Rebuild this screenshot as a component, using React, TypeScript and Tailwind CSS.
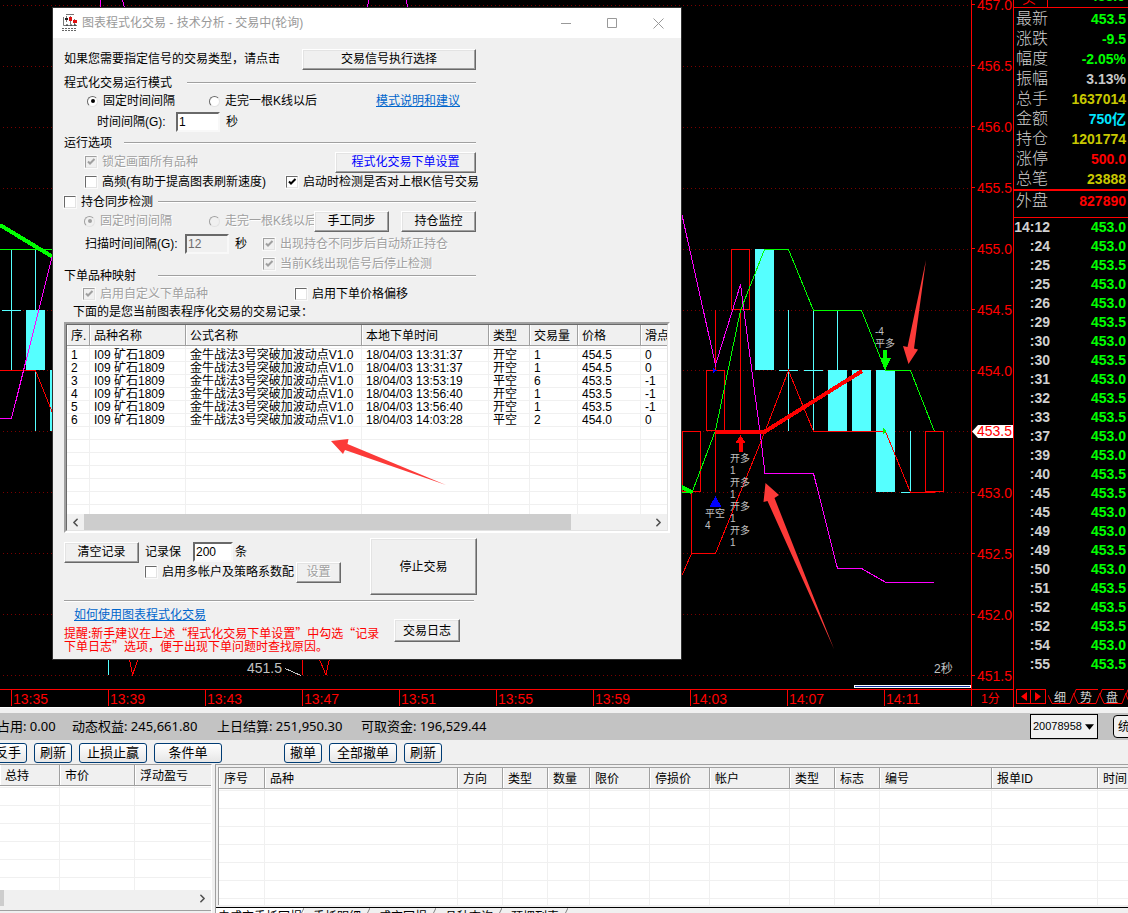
import React from 'react';
import clsx from 'clsx';
import { ChevronLeft, ChevronRight } from 'lucide-react';

interface TradeRecord {
  name: string;
  formula: string;
  time: string;
  type: string;
  volume: number;
  price: string;
  slip: number;
}

const records: TradeRecord[] = [
  { name: 'I09 矿石1809', formula: '金牛战法3号突破加波动点V1.0', time: '18/04/03 13:31:37', type: '开空', volume: 1, price: '454.5', slip: 0 },
  { name: 'I09 矿石1809', formula: '金牛战法3号突破加波动点V1.0', time: '18/04/03 13:31:37', type: '开空', volume: 1, price: '454.5', slip: 0 },
  { name: 'I09 矿石1809', formula: '金牛战法3号突破加波动点V1.0', time: '18/04/03 13:53:19', type: '平空', volume: 6, price: '453.5', slip: -1 },
  { name: 'I09 矿石1809', formula: '金牛战法3号突破加波动点V1.0', time: '18/04/03 13:56:40', type: '开空', volume: 1, price: '453.5', slip: -1 },
  { name: 'I09 矿石1809', formula: '金牛战法3号突破加波动点V1.0', time: '18/04/03 13:56:40', type: '开空', volume: 1, price: '453.5', slip: -1 },
  { name: 'I09 矿石1809', formula: '金牛战法3号突破加波动点V1.0', time: '18/04/03 14:03:28', type: '平空', volume: 2, price: '454.0', slip: 0 },
];

const recordColumns = [
  { title: '序.', width: 23 },
  { title: '品种名称', width: 96 },
  { title: '公式名称', width: 176 },
  { title: '本地下单时间', width: 127 },
  { title: '类型', width: 41 },
  { title: '交易量', width: 48 },
  { title: '价格', width: 63 },
  { title: '滑点', width: 29 },
];

const quotes = [
  { label: '最新', value: '453.5', color: 'text-[#00ff00]' },
  { label: '涨跌', value: '-9.5', color: 'text-[#00ff00]' },
  { label: '幅度', value: '-2.05%', color: 'text-[#00ff00]' },
  { label: '振幅', value: '3.13%', color: 'text-[#c8c8c8]' },
  { label: '总手', value: '1637014', color: 'text-[#c8c800]' },
  { label: '金额', value: '750亿', color: 'text-[#00e6ff]' },
  { label: '持仓', value: '1201774', color: 'text-[#c8c800]' },
  { label: '涨停', value: '500.0', color: 'text-[#ff0000]' },
  { label: '总笔', value: '23888', color: 'text-[#c8c800]' },
];

const ticks: [string, string][] = [
  ['14:12', '453.0'], [':24', '453.0'], [':25', '453.5'], [':25', '453.0'],
  [':26', '453.0'], [':29', '453.5'], [':30', '453.0'], [':30', '453.5'],
  [':31', '453.0'], [':32', '453.5'], [':33', '453.5'], [':37', '453.0'],
  [':39', '453.0'], [':40', '453.5'], [':45', '453.5'], [':45', '453.0'],
  [':49', '453.0'], [':49', '453.5'], [':50', '453.0'], [':51', '453.5'],
  [':52', '453.5'], [':52', '453.5'], [':54', '453.0'], [':55', '453.5'],
];

const prices = ['457.0', '456.5', '456.0', '455.5', '455.0', '454.5', '454.0', '453.5', '453.0', '452.5', '452.0', '451.5'];
const times = ['13:35', '13:39', '13:43', '13:47', '13:51', '13:55', '13:59', '14:03', '14:07', '14:11'];
const gridLines = [5, 66, 127, 188, 249, 310, 370, 431, 492, 553, 614, 675];

const positionColumns = [
  { title: '总持', width: 60 },
  { title: '市价', width: 75 },
  { title: '浮动盈亏', width: 77 },
];

const orderColumns = [
  { title: '序号', width: 46 },
  { title: '品种', width: 193 },
  { title: '方向', width: 45 },
  { title: '类型', width: 45 },
  { title: '数量', width: 42 },
  { title: '限价', width: 60 },
  { title: '停损价', width: 60 },
  { title: '帐户', width: 80 },
  { title: '类型', width: 45 },
  { title: '标志', width: 45 },
  { title: '编号', width: 112 },
  { title: '报单ID', width: 106 },
  { title: '时间', width: 60 },
];

interface CheckProps {
  label: string;
  checked?: boolean;
  disabled?: boolean;
  className?: string;
}

const disabledText = 'text-[#a0a0a0] [text-shadow:1px_1px_0_#fff]';

const CheckBox: React.FC<CheckProps> = ({ label, checked, disabled, className }) => (
  <label className={clsx('flex shrink-0 items-center whitespace-nowrap', disabled && disabledText, className)}>
    <span className="relative mr-[5px] size-3 shrink-0">
      <input
        type="checkbox"
        defaultChecked={checked}
        disabled={disabled}
        className="peer block size-3 appearance-none border border-t-[#696969] border-r-[#e3e3e3] border-b-[#e3e3e3] border-l-[#696969] bg-white shadow-[0_0_0_1px_#fafafa] disabled:border-t-[#a0a0a0] disabled:border-l-[#a0a0a0] disabled:bg-[#f0f0f0]"
      />
      <svg viewBox="0 0 12 12" className="pointer-events-none absolute inset-0 hidden size-3 peer-checked:block">
        <path d="M3 5.5 5 7.5 9.500 3" fill="none" stroke="currentColor" strokeWidth="2" />
      </svg>
    </span>
    {label}
  </label>
);

const Radio: React.FC<CheckProps & { name: string }> = ({ label, name, checked, disabled, className }) => (
  <label className={clsx('flex shrink-0 items-center overflow-hidden whitespace-nowrap', disabled && disabledText, className)}>
    <span className="relative mr-[5px] size-[11px] shrink-0">
      <input
        type="radio"
        name={name}
        defaultChecked={checked}
        disabled={disabled}
        className="peer block size-[11px] appearance-none rounded-full border border-t-[#696969] border-r-[#e3e3e3] border-b-[#e3e3e3] border-l-[#696969] bg-white disabled:border-t-[#a0a0a0] disabled:border-l-[#a0a0a0] disabled:bg-[#f0f0f0]"
      />
      <span className="pointer-events-none absolute inset-0 m-auto hidden size-1 rounded-full bg-current peer-checked:block" />
    </span>
    {label}
  </label>
);

const ClassicButton: React.FC<React.ButtonHTMLAttributes<HTMLButtonElement>> = ({ className, ...props }) => (
  <button
    type="button"
    className={clsx(
      'h-[21px] shrink-0 border border-t-white border-r-[#696969] border-b-[#696969] border-l-white bg-[#f0f0f0] text-center whitespace-nowrap shadow-[inset_-1px_-1px_0_#a0a0a0,inset_1px_1px_0_#e3e3e3]',
      className,
    )}
    {...props}
  />
);

const sunken = 'border-2 border-t-[#696969] border-r-[#f8f8f8] border-b-[#f8f8f8] border-l-[#696969]';

const Rule: React.FC = () => <div className="h-[2px] flex-1 border-t border-b border-t-[#a0a0a0] border-b-white" />;

const GridHead: React.FC<{ columns: { title: string; width: number }[]; className: string }> = ({ columns, className }) => (
  <thead>
    <tr>
      {columns.map((c, i) => (
        <th
          key={i}
          className={clsx(
            'overflow-hidden border-r border-b border-[#a0a0a0] bg-[#f0f0f0] p-0 text-left font-normal whitespace-nowrap shadow-[inset_1px_0_0_#fff]',
            className,
          )}
        >
          {c.title}
        </th>
      ))}
    </tr>
  </thead>
);

const RecordTable: React.FC = () => (
  <div className="border-2 border-t-[#a0a0a0] border-r-white border-b-white border-l-[#a0a0a0]">
    <div className="border border-t-[#696969] border-r-[#e3e3e3] border-b-[#e3e3e3] border-l-[#696969] bg-white">
      <div className="h-[189px] overflow-hidden">
        <table className="w-full table-fixed border-separate border-spacing-0">
          <colgroup>
            {recordColumns.map((c) => <col key={c.title} style={{ width: c.width }} />)}
          </colgroup>
          <GridHead columns={recordColumns} className="h-[21px] pt-px pl-1" />
          <tbody className="leading-3">
            <tr>
              {recordColumns.map((c) => <td key={c.title} className="h-[3px] border-r border-b border-[#f0f0f0] p-0" />)}
            </tr>
            {Array.from({ length: 13 }, (_, i) => {
              const r = records[i];
              const cells = r ? [i + 1, r.name, r.formula, r.time, r.type, r.volume, r.price, r.slip] : Array(8).fill('');
              return (
                <tr key={i}>
                  {cells.map((cell, j) => (
                    <td key={j} className="h-[13px] border-r border-b border-[#f0f0f0] p-0 pl-1 whitespace-nowrap">{cell}</td>
                  ))}
                </tr>
              );
            })}
          </tbody>
        </table>
      </div>
      <div className="flex h-4 items-center bg-[#f0f0f0] text-[#505050]">
        <button type="button" aria-label="向左滚动" className="flex w-[17px] justify-center"><ChevronLeft size={13} strokeWidth={3} /></button>
        <div className="flex h-full flex-1"><div className="h-full w-[86%] bg-[#cdcdcd]" /></div>
        <button type="button" aria-label="向右滚动" className="flex w-[17px] justify-center"><ChevronRight size={13} strokeWidth={3} /></button>
      </div>
    </div>
  </div>
);

const TradeDialog: React.FC = () => (
  <section className="absolute top-2 left-[53px] w-[628px] bg-[#f0f0f0] text-xs text-black shadow-[0_0_0_1px_#303030]">
    <header className="flex h-[30px] items-center bg-white pl-2 text-[#999]">
      <svg viewBox="0 0 17 18" className="mr-1 h-[18px] w-[17px]">
        <path d="M2.500 3v8.500H16" fill="none" stroke="#777" />
        <path d="M5.500 2v6M9.500 2v8M13.500 5v6M5 .5h8" stroke="#777" />
        <path d="M4 4h3v2H4z" fill="#222" />
        <path d="M8 3h3v4H8zM12 6h4v3h-4z" fill="#e01010" />
        <path d="M5 11h2M9 11h2M13 11h2" stroke="#222" />
        <path d="M1 14.500h15M1 16.500h15" stroke="#666" strokeDasharray="2 1" />
      </svg>
      <h1>图表程式化交易 - 技术分析 - 交易中(轮询)</h1>
      <div className="ml-auto flex">
        <button type="button" aria-label="最小化" className="flex h-[30px] w-[45px] items-center justify-center">
          <svg viewBox="0 0 11 11" className="size-[11px]"><path d="M0 5.500h10" stroke="#999" /></svg>
        </button>
        <button type="button" aria-label="最大化" className="flex h-[30px] w-[46px] items-center justify-center">
          <svg viewBox="0 0 11 11" className="size-[11px]"><path d="M.5 .5h9v9h-9z" fill="none" stroke="#999" /></svg>
        </button>
        <button type="button" aria-label="关闭" className="flex h-[30px] w-[46px] items-center justify-center">
          <svg viewBox="0 0 11 11" className="size-[11px]"><path d="M.5 .5l10 10M10.500 .5l-10 10" stroke="#999" /></svg>
        </button>
      </div>
    </header>

    <div className="px-[11px] pt-[10px] pb-[7px]">
      <div className="w-[412px]">
        <div className="mb-1 flex h-[22px] items-center">
          <span className="w-[238px]">如果您需要指定信号的交易类型，请点击</span>
          <ClassicButton className="w-[174px]">交易信号执行选择</ClassicButton>
        </div>

        <div className="flex h-[18px] items-center">
          <h2 className="w-[123px]">程式化交易运行模式</h2>
          <Rule />
        </div>
        <div className="flex h-[18px] items-center pl-[23px]">
          <Radio name="mode" label="固定时间间隔" checked className="w-[122px]" />
          <Radio name="mode" label="走完一根K线以后" className="w-[167px]" />
          <a href="#mode" className="text-[#0066cc] underline">模式说明和建议</a>
        </div>
        <div className="flex h-6 items-center pl-[33px]">
          <label htmlFor="interval" className="w-[79px]">时间间隔(G):</label>
          <input id="interval" defaultValue="1" className={clsx('h-5 w-[44px] bg-white px-px', sunken)} />
          <span className="ml-[6px]">秒</span>
        </div>

        <div className="flex h-[18px] items-center">
          <h2 className="w-[60px]">运行选项</h2>
          <Rule />
        </div>
        <div className="flex h-5 items-center pl-[21px]">
          <CheckBox label="锁定画面所有品种" checked disabled className="w-[250px]" />
          <ClassicButton className="w-[141px] text-[#0000ff]">程式化交易下单设置</ClassicButton>
        </div>
        <div className="flex h-5 items-center pl-[21px]">
          <CheckBox label="高频(有助于提高图表刷新速度)" className="w-[201px]" />
          <CheckBox label="启动时检测是否对上根K信号交易" checked />
        </div>

        <div className="flex h-5 items-center">
          <CheckBox label="持仓同步检测" className="w-[94px]" />
          <Rule />
        </div>
        <div className="flex h-[18px] items-center pl-5">
          <Radio name="sync" label="固定时间间隔" checked disabled className="w-[125px]" />
          <Radio name="sync" label="走完一根K线以后" disabled className="w-[105px]" />
          <ClassicButton className="w-[75px]">手工同步</ClassicButton>
          <ClassicButton className="ml-3 w-[75px]">持仓监控</ClassicButton>
        </div>
        <div className="flex h-7 items-center pl-[21px]">
          <label htmlFor="scan" className="w-[100px]">扫描时间间隔(G):</label>
          <input id="scan" defaultValue="12" disabled className={clsx('h-5 w-[44px] bg-[#f0f0f0] px-px text-[#6d6d6d]', sunken)} />
          <span className="ml-[6px] w-7">秒</span>
          <CheckBox label="出现持仓不同步后自动矫正持仓" checked disabled />
        </div>
        <div className="flex h-3 items-center pl-[199px]">
          <CheckBox label="当前K线出现信号后停止检测" checked disabled />
        </div>

        <div className="flex h-3 items-center">
          <h2 className="w-[94px]">下单品种映射</h2>
          <Rule />
        </div>
        <div className="flex h-6 items-center pl-[19px]">
          <CheckBox label="启用自定义下单品种" checked disabled className="w-[212px]" />
          <CheckBox label="启用下单价格偏移" />
        </div>
        <p className="mb-1 pl-[9px] leading-3">下面的是您当前图表程序化交易的交易记录：</p>
      </div>

      <RecordTable />

      <div className="mt-[5px] flex w-[413px]">
        <div className="w-[306px]">
          <div className="flex h-7 items-center">
            <ClassicButton className="w-[75px]">清空记录</ClassicButton>
            <label htmlFor="keep" className="ml-[6px] w-12">记录保</label>
            <input id="keep" defaultValue="200" className={clsx('h-5 w-10 bg-white px-px', sunken)} />
            <span className="ml-[2px]">条</span>
          </div>
          <div className="flex h-3 items-center pl-[81px]">
            <CheckBox label="启用多帐户及策略系数配" className="w-[151px]" />
            <ClassicButton disabled className={clsx('w-[45px]', disabledText)}>设置</ClassicButton>
          </div>
        </div>
        <ClassicButton className="h-[57px] w-[107px]">停止交易</ClassicButton>
      </div>

      <div className="mt-[5px] flex w-[410px]"><Rule /></div>
      <div className="flex w-[412px] pt-[6px]">
        <div className="w-[330px] shrink-0">
          <a href="#help" className="ml-[10px] block w-fit leading-[14px] text-[#0066cc] underline">如何使用图表程式化交易</a>
          <p className="mt-1 font-['Noto_Sans_CJK_SC',sans-serif] leading-[13px] whitespace-nowrap text-[#ff0000]">
            提醒:新手建议在上述“程式化交易下单设置”中勾选“记录<br />下单日志”选项，便于出现下单问题时查找原因。
          </p>
        </div>
        <ClassicButton className="mt-[11px] h-[23px] w-[66px]">交易日志</ClassicButton>
      </div>
    </div>

    <svg viewBox="0 0 116 47" className="pointer-events-none absolute top-[431px] left-[278px] h-[47px] w-[116px]">
      <path d="M0 2 17.500 0 16.500 5 115 46 14 11 12 15z" fill="#fc3a38" />
    </svg>
  </section>
);

const entryLabels = [462, 486, 510, 534];

const Chart: React.FC = () => (
  <svg className="absolute inset-0 size-full" shapeRendering="crispEdges">
    {gridLines.map((y) => (
      <line key={y} x1="3" x2="100%" y1={y + 0.5} y2={y + 0.5} stroke="#7a0000" strokeDasharray="1 3" />
    ))}

    {/* left edge, before the dialog */}
    <g fill="none">
      <path d="M11.500 250v120M2 310.500h19M35.500 250v181" stroke="#55ffff" />
      <path d="M26 310h19v60h-19zM50 370h4v61h-4z" fill="#55ffff" />
      <path d="M0 370.500h35.500L53 414" stroke="#ff0000" />
      <path d="M0 249.500h53" stroke="#00ff00" />
      <path d="M0 225 53 257" stroke="#00ff00" strokeWidth="4" />
      <path d="M0 418.500h11.500L53 253M100.500 0v8M122.500 0l2 8M368.500 0l-1 8M406.500 0l1 8" stroke="#ff00ff" />
    </g>

    {/* candles */}
    <path d="M755 249h19v121h-19zM828 370h19v61h-19zM852 370h19v61h-19zM876 370h19v122h-19z" fill="#55ffff" />
    <path d="M779 370.500h19M804 370.500h19M788.500 310v121M813.500 310v121M837.500 310v60M910.500 431v61M901 492.500h10M108.500 655v20" stroke="#55ffff" fill="none" />
    <path
      d="M682.500 431.500h18v60h-18zM706.500 370.500h18v60h-18zM731.500 249.500h18v60h-18zM925.500 431.500h18v60h-18zM715.500 310v60M715.500 431v61M740.500 310v121M691.500 492v61M302.500 655v20"
      stroke="#ff0000"
      fill="none"
    />

    {/* channel lines */}
    <g fill="none">
      <path d="M680 580 691.500 553.500h24L765 431.500 788.500 370.500 813.500 431.500h72L910.500 492.500h24M129 656l3.500 19 6.500-19M318 656l8 19 4-19" stroke="#ff0000" />
      <path d="M680 206 715.500 365 740.500 284.500 761 440 765 473.500h48.500L837.500 568.500h24L886 582.500h48" stroke="#ff00ff" />
      <path d="M682 492.500h10L715.500 430.500 740.500 310.500 764.500 249.500h24L813.500 310.500h48L885.500 370.500h25L934.500 431.500" stroke="#00ff00" />
      <path d="M681 487l11 5" stroke="#00ff00" strokeWidth="4" />
      <path d="M715 431.500h50L862 371" stroke="#ff0000" strokeWidth="4" />
    </g>

    {/* signal marks */}
    <path d="M883 350h4v8h4l-6 12-5-12h3zM883 428l4 3-4 3z" fill="#00ff00" />
    <path d="M740.500 435l5 8h-3v9h-4v-9h-3z" fill="#ff0000" />
    <path d="M715.500 496l6 11h-12zM713 368l4 2.500-4 2.500z" fill="#0000ff" />

    <g fill="#c0c0c0" fontSize="10">
      {entryLabels.map((y) => (
        <React.Fragment key={y}>
          <text x="730" y={y}>开多</text>
          <text x="730" y={y + 12}>1</text>
        </React.Fragment>
      ))}
      <text x="705" y="517">平空</text>
      <text x="705" y="529">4</text>
      <text x="875" y="335">-4</text>
      <text x="875" y="347">平多</text>
    </g>
    <g fill="#c0c0c0">
      <text x="247" y="673" fontSize="14">451.5</text>
      <text x="934" y="673" fontSize="12">2秒</text>
      <path d="M285 668.500l16 7" stroke="#c0c0c0" />
    </g>

    <g fill="#fc3a38" shapeRendering="auto">
      <path d="M926 260 914 348.500 918 349.500 908.500 364 903 346 907.500 347z" />
      <path d="M765.500 483 779 495 774.500 498 834 649 767.500 501 763.500 502z" />
    </g>
  </svg>
);

const QuotePanel: React.FC = () => (
  <aside className="flex w-[115px] shrink-0 flex-col overflow-hidden border-l border-[#ff0000] text-base leading-5 text-[#d0d0d0]">
    <div className="flex h-[7px] items-end justify-between overflow-hidden pr-[3px] text-sm">
      <span className="h-full w-[34px] border-r border-[#ff0000] pl-2 text-[#ff0000]"><span className="-mt-3 block">买</span></span>
      <span className="-mt-[14px] h-5 self-start font-bold text-[#00ff00]">453.0</span>
    </div>
    <dl className="border-t border-b-2 border-[#ff0000] pt-px">
      {quotes.map((q) => (
        <div key={q.label} className="flex h-5 items-center justify-between pr-[2px] pl-[2px]">
          <dt className="font-light">{q.label}</dt>
          <dd className={clsx('text-sm font-bold', q.color)}>{q.value}</dd>
        </div>
      ))}
    </dl>
    <dl className="h-[27px] border-b border-[#ff0000]">
      <div className="flex h-5 items-center justify-between pr-[2px] pl-[2px]">
        <dt className="font-light">外盘</dt>
        <dd className="text-sm font-bold text-[#ff0000]">827890</dd>
      </div>
    </dl>
    <table className="w-full border-separate border-spacing-0 text-sm leading-[19px] font-bold">
      <tbody>
        {ticks.map(([time, price], i) => (
          <tr key={i}>
            <td className="w-9 p-0 text-right">{time}</td>
            <td className="p-0 pr-[2px] text-right text-[#00ff00]">{price}</td>
          </tr>
        ))}
      </tbody>
    </table>
    <nav className="mt-auto mb-[3px] flex h-[15px] shrink-0 pl-[2px] text-xs leading-[18px]">
      <button type="button" aria-label="上一页" className="flex w-[15px] shrink-0 items-center justify-center border border-[#ff0000]">
        <svg viewBox="0 0 6 9" className="h-[9px] w-[6px]"><path d="M6 0v9L0 4.500z" fill="#ff0000" /></svg>
      </button>
      <button type="button" aria-label="下一页" className="flex w-[15px] shrink-0 items-center justify-center border border-l-0 border-[#ff0000]">
        <svg viewBox="0 0 6 9" className="h-[9px] w-[6px]"><path d="M0 0v9L6 4.500z" fill="#ff0000" /></svg>
      </button>
      {['细', '势', '盘', '价'].map((t, i) => (
        <button type="button" key={t} className="relative ml-[2px] w-6 shrink-0 text-center">
          <svg viewBox="0 0 26 15" className="absolute inset-0 h-[15px] w-[26px]">
            <path d={i === 0 ? 'M0 6 4 14.500H22L26 4' : 'M0 6 2 .5H24M0 6 4 14.500H22L26 4'} fill="none" stroke="#ff0000" />
          </svg>
          <span className="relative">{t}</span>
        </button>
      ))}
    </nav>
  </aside>
);

const ToolButton: React.FC<{ children: string; className: string }> = ({ children, className }) => (
  <button
    type="button"
    className={clsx('h-5 shrink-0 rounded-[3px] border border-[#003c74] bg-linear-to-b from-white to-[#e6e6e6] text-center text-[13px] leading-[18px] whitespace-nowrap', className)}
  >
    {children}
  </button>
);

const EmptyGrid: React.FC<{ columns: { title: string; width: number }[]; rows: number; className?: string }> = ({ columns, rows, className }) => (
  <table className={clsx('table-fixed border-separate border-spacing-0 bg-white', className)}>
    <colgroup>
      {columns.map((c, i) => <col key={i} style={{ width: c.width }} />)}
    </colgroup>
    <GridHead columns={columns} className="h-[21px] pt-px pl-[5px]" />
    <tbody>
      <tr>
        {columns.map((c, i) => <td key={i} className="h-[2px] border-r border-b border-[#f0f0f0] p-0" />)}
      </tr>
      {Array.from({ length: rows }, (_, i) => (
        <tr key={i}>
          {columns.map((c, j) => <td key={j} className="h-[18px] border-r border-b border-[#f0f0f0] p-0" />)}
        </tr>
      ))}
    </tbody>
  </table>
);

const AccountPanel: React.FC = () => (
  <section className="flex h-[206px] shrink-0 flex-col border-t border-white bg-[#f0f0f0] text-xs text-black">
    <div className="mt-[5px] flex h-[27px] shrink-0 items-center bg-[#c3c3c3] font-['Noto_Sans','Noto_Sans_CJK_SC',sans-serif] text-[13px] whitespace-nowrap">
      <span className="-ml-[3px] w-[75px]">占用: 0.00</span>
      <span className="w-[145px]">动态权益: 245,661.80</span>
      <span className="w-36">上日结算: 251,950.30</span>
      <span>可取资金: 196,529.44</span>
      <div className="ml-auto flex w-[98px] shrink-0 items-center overflow-hidden">
        <div className="relative shrink-0">
          <select aria-label="帐户" className="block h-[25px] w-[68px] appearance-none border border-black bg-[#f0f0f0] pl-[2px] font-['Liberation_Sans',sans-serif] text-[11px]">
            <option>20078958</option>
          </select>
          <svg viewBox="0 0 10 6" className="pointer-events-none absolute top-[10px] right-1 h-[6px] w-[9px]"><path d="M0 0h10L5 6z" /></svg>
        </div>
        <button type="button" className="ml-[15px] h-[23px] w-10 shrink-0 rounded-[4px] border border-black bg-[#f0f0f0] pl-1 text-left text-xs">统计</button>
      </div>
    </div>

    <div className="flex h-6 shrink-0 items-center gap-[7px] overflow-hidden pt-[2px]">
      <ToolButton className="-ml-[11px] w-[38px]">反手</ToolButton>
      <ToolButton className="w-[38px]">刷新</ToolButton>
      <ToolButton className="w-[68px]">止损止赢</ToolButton>
      <ToolButton className="mr-[55px] w-[68px]">条件单</ToolButton>
      <ToolButton className="w-[38px]">撤单</ToolButton>
      <ToolButton className="w-[68px]">全部撤单</ToolButton>
      <ToolButton className="w-[38px]">刷新</ToolButton>
    </div>

    <div className="flex min-h-0 flex-1">
      <div className="flex w-[212px] shrink-0 flex-col border-t border-r border-t-[#a0a0a0] border-r-white">
        <div className="h-[125px] overflow-hidden bg-white">
          <EmptyGrid columns={positionColumns} rows={6} className="w-full" />
        </div>
        <div className="flex h-4 items-center justify-between">
          <div className="h-full w-1 bg-[#cdcdcd]" />
          <button type="button" aria-label="向右滚动" className="flex w-[17px] justify-center text-[#505050]"><ChevronRight size={13} strokeWidth={3} /></button>
        </div>
        <div className="mt-1 border-t border-[#a0a0a0]" />
      </div>
      <div className="ml-[3px] flex min-w-0 flex-1 flex-col overflow-hidden border-t border-l border-[#a0a0a0]">
        <div className="mt-[2px] ml-[2px] h-[138px] overflow-hidden border-t border-l border-[#a0a0a0] bg-white">
          <EmptyGrid columns={orderColumns} rows={7} className="w-[939px]" />
        </div>
        <nav className="mt-[2px] flex h-[6px] overflow-hidden border-t border-black leading-[18px]">
          {['未成交委托回报', '委托明细', '成交回报', '品种查询', '预埋列表'].map((t, i) => (
            <button type="button" key={t} className={clsx('relative h-[18px] shrink-0 overflow-hidden whitespace-nowrap', i === 0 ? 'w-[88px] bg-white' : 'w-[66px]')}>
              {t}
              <svg viewBox="0 0 4 8" className="absolute top-0 right-0 h-2 w-1"><path d="M4 0 0 8" stroke="#808080" /></svg>
            </button>
          ))}
        </nav>
      </div>
    </div>
  </section>
);

export default function App() {
  return (
    <main className="flex h-screen flex-col overflow-hidden bg-black font-['Liberation_Sans','Noto_Sans_CJK_SC',sans-serif]">
      <div className="flex min-h-0 flex-1">
        <div className="flex min-w-0 flex-1 flex-col">
          <div className="flex min-h-0 flex-1">
            <div className="relative min-w-0 flex-1 border-r border-[#ff0000]">
              <Chart />
              <TradeDialog />
              <div className="absolute right-0 bottom-px h-[3px] w-[117px] border border-white bg-[#1030a0]" />
            </div>
            <div className="w-[41px] shrink-0 overflow-hidden text-sm text-[#ff0000]">
              <ol className="-mt-[26px]">
                {prices.map((p) => (
                  <li key={p} className="flex h-[61px] items-center">
                    {p === '453.5' ? (
                      <span className="w-full bg-white pl-[5px] leading-[13px] [clip-path:polygon(0_50%,6px_0,100%_0,100%_100%,6px_100%)]">{p}</span>
                    ) : (
                      <>
                        <span className="mr-[2px] h-px w-[3px] bg-[#ff0000]" />
                        {p}
                      </>
                    )}
                  </li>
                ))}
              </ol>
            </div>
          </div>
          <div className="flex h-[18px] shrink-0 border-t border-[#ff0000] text-sm leading-[18px] text-[#ff0000]">
            <ol className="flex min-w-0 flex-1 overflow-hidden pl-[11px]">
              {times.map((t) => <li key={t} className="mb-px w-[97px] shrink-0 border-l border-[#ff0000] pl-px">{t}</li>)}
            </ol>
            <span className="mb-px w-[42px] border-l border-[#ff0000] pl-[9px] text-xs leading-[18px]">1分</span>
          </div>
        </div>
        <QuotePanel />
      </div>
      <AccountPanel />
    </main>
  );
}
